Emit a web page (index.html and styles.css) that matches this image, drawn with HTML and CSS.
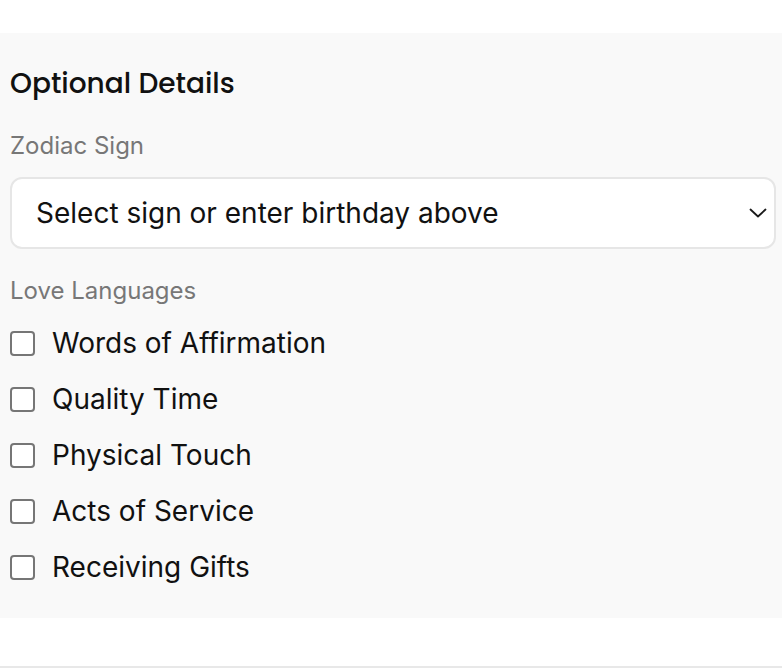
FILE: index.html
```html
<!DOCTYPE html>
<html>
<head>
<meta charset="utf-8">
<link rel="stylesheet" href="styles.css">
</head>
<body>
<div class="spacer"></div>
<section class="panel">
  <h2 class="title">Optional Details</h2>
  <div class="label">Zodiac Sign</div>
  <div class="select">
    <span>Select sign or enter birthday above</span>
    <svg class="chev" width="18" height="10" viewBox="0 0 18 10"><path d="M1.5 1.5 L9 8.5 L16.5 1.5" fill="none" stroke="#1a1a1a" stroke-width="1.8" stroke-linecap="round" stroke-linejoin="round"/></svg>
  </div>
  <div class="label label2">Love Languages</div>
  <ul class="checks">
    <li><span class="box"></span>Words of Affirmation</li>
    <li><span class="box"></span>Quality Time</li>
    <li><span class="box"></span>Physical Touch</li>
    <li><span class="box"></span>Acts of Service</li>
    <li><span class="box"></span>Receiving Gifts</li>
  </ul>
</section>
<div class="footer"></div>
</body>
</html>
```
FILE: styles.css
```css
html, body { margin: 0; padding: 0; background: #fff; }
body { font-family: Inter, "Noto Sans", sans-serif; color: #111; width: 782px; overflow: hidden; }
.spacer { height: 33px; }
.panel { background: #f9f9f9; padding: 32px 6px 20px 10px; height: 585px; box-sizing: border-box; }
.title { margin: 0; font-family: "Poppins", Inter, sans-serif; font-weight: 500; font-size: 28px; line-height: 38px; color: #111; }
.label { margin-top: 29px; font-size: 24px; line-height: 28px; color: #777; }
.select { margin-top: 17px; height: 72px; box-sizing: border-box; background: #fff; border: 2px solid #e6e6e6; border-radius: 12px; display: flex; align-items: center; justify-content: space-between; padding: 0 7px 0 24px; font-size: 28px; color: #111; }
.label2 { margin-top: 28px; }
.checks { list-style: none; margin: 10px 0 0 0; padding: 0; }
.checks li { height: 56px; display: flex; align-items: center; gap: 17px; font-size: 28px; color: #111; }
.box { width: 25px; height: 25px; box-sizing: border-box; border: 2px solid #767676; border-radius: 4px; background: #fff; flex: none; }
.footer { margin-top: 48px; border-top: 2px solid #e8e8e8; }
```
